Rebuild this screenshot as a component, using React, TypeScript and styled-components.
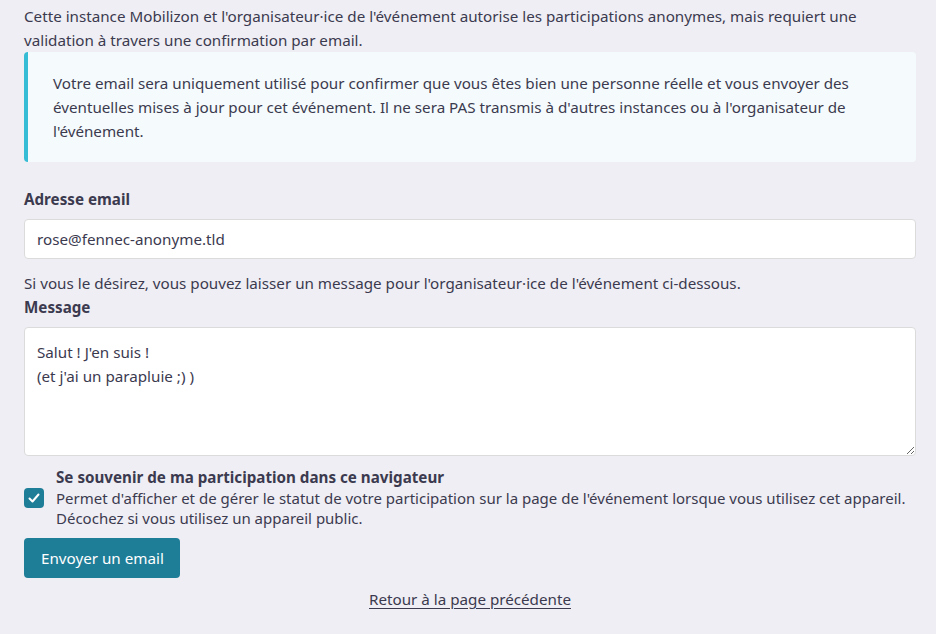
import React from "react";
import styled, { createGlobalStyle } from "styled-components";

const Global = createGlobalStyle`
  html, body { margin: 0; padding: 0; background: #efeef4; }
  body {
    font-family: "Noto Sans", "DejaVu Sans", sans-serif;
    font-size: 15.2px;
    line-height: 24px;
    color: #3b3a4f;
  }
  * { box-sizing: border-box; }
`;

const Page = styled.div`
  padding: 4px 20px 20px 24px;
  display: flex;
  flex-direction: column;
`;

const Intro = styled.p`
  margin: 0;
`;

const Notice = styled.div`
  background: #f5fbfc;
  border-left: 4px solid #36bcd4;
  border-radius: 4px;
  padding: 19px 24px 19px 25px;
  color: #3b3a4f;
`;

const Field = styled.div<{ $top?: number }>`
  display: flex;
  flex-direction: column;
  gap: 8px;
  margin-top: ${(p) => p.$top ?? 0}px;
`;

const Label = styled.label`
  font-weight: 700;
  display: block;
`;

const Input = styled.input`
  font: inherit;
  color: inherit;
  height: 40px;
  background: #fff;
  border: 1px solid #dbdbdb;
  border-radius: 4px;
  padding: 0 12px;
  width: 100%;
  outline: none;
`;

const TextArea = styled.textarea`
  font: inherit;
  color: inherit;
  height: 129px;
  background: #fff;
  border: 1px solid #dbdbdb;
  border-radius: 4px;
  padding: 12px 12px;
  width: 100%;
  resize: vertical;
  outline: none;
`;

const Hint = styled.p`
  margin: 12px 0 0;
`;

const CheckRow = styled.div`
  display: flex;
  align-items: center;
  gap: 12px;
  margin-top: 11px;
`;

const Box = styled.span`
  flex: 0 0 20px;
  width: 20px;
  height: 20px;
  border-radius: 4px;
  background: #1e7d97;
  display: flex;
  align-items: center;
  justify-content: center;
`;

const CheckText = styled.div`
  flex: 1;
  line-height: 20.5px;
`;

const CheckTitle = styled.div`
  font-weight: 700;
`;

const CheckDesc = styled.div`
  font-size: 15px;
`;

const Button = styled.button`
  font: inherit;
  align-self: flex-start;
  background: #1e7d97;
  color: #fff;
  border: none;
  border-radius: 4px;
  height: 40px;
  padding: 0 16px 0 17px;
  margin-top: 9px;
  cursor: pointer;
`;

const Back = styled.a`
  align-self: center;
  color: #3b3a4f;
  text-decoration: underline;
  text-underline-offset: 3px;
  margin-top: 9px;
`;

export default function App() {
  return (
    <>
      <Global />
      <Page>
        <Intro>
          Cette instance Mobilizon et l'organisateur·ice de l'événement autorise les participations anonymes, mais requiert une validation à travers une confirmation par email.
        </Intro>
        <Notice>
          Votre email sera uniquement utilisé pour confirmer que vous êtes bien une personne réelle et vous envoyer des éventuelles mises à jour pour cet événement. Il ne sera PAS transmis à d'autres instances ou à l'organisateur de l'événement.
        </Notice>
        <Field $top={25}>
          <Label>Adresse email</Label>
          <Input defaultValue="rose@fennec-anonyme.tld" />
        </Field>
        <Hint>
          Si vous le désirez, vous pouvez laisser un message pour l'organisateur·ice de l'événement ci-dessous.
        </Hint>
        <Field>
          <Label>Message</Label>
          <TextArea defaultValue={"Salut ! J'en suis !\n(et j'ai un parapluie ;) )"} />
        </Field>
        <CheckRow>
          <Box>
            <svg width="14" height="14" viewBox="0 0 14 14">
              <path d="M2.5 7.5 L5.5 10.5 L11.5 3.5" fill="none" stroke="#fff" strokeWidth="2" strokeLinecap="round" strokeLinejoin="round" />
            </svg>
          </Box>
          <CheckText>
            <CheckTitle>Se souvenir de ma participation dans ce navigateur</CheckTitle>
            <CheckDesc>
              Permet d'afficher et de gérer le statut de votre participation sur la page de l'événement lorsque vous utilisez cet appareil. Décochez si vous utilisez un appareil public.
            </CheckDesc>
          </CheckText>
        </CheckRow>
        <Button>Envoyer un email</Button>
        <Back href="#">Retour à la page précédente</Back>
      </Page>
    </>
  );
}
